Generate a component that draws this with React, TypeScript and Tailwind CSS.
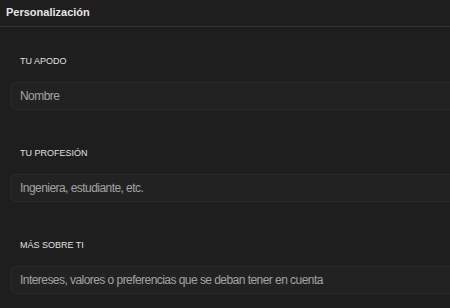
const fields = [
  { label: "TU APODO", placeholder: "Nombre" },
  { label: "TU PROFESIÓN", placeholder: "Ingeniera, estudiante, etc." },
  { label: "MÁS SOBRE TI", placeholder: "Intereses, valores o preferencias que se deban tener en cuenta" },
];

export default function App() {
  return (
    <div
      className="h-[308px] w-[450px] overflow-hidden bg-[#1e1e1e]"
      style={{ fontFamily: "'Liberation Sans', Arial, sans-serif" }}
    >
      <div className="flex h-[27px] items-center border-b border-[#333333] px-[6px] pb-[2px]">
        <h1 className="text-[11px] font-bold text-[#e6e6e6]">Personalización</h1>
      </div>
      <div className="flex flex-col gap-[36px] pt-[27px]">
        {fields.map((f) => (
          <div key={f.label} className="flex flex-col gap-[14px]">
            <label className="px-[20px] text-[9px] leading-[14px] text-[#e0e0e0]">
              {f.label}
            </label>
            <input
              placeholder={f.placeholder}
              className="ml-[10px] h-[28px] w-[480px] shrink-0 rounded-[6px] border border-[#2a2a2a] bg-[#222222] px-[9px] text-[12px] tracking-[-0.55px] text-[#e0e0e0] outline-none placeholder:text-[#a3a3a3]"
            />
          </div>
        ))}
      </div>
    </div>
  );
}
